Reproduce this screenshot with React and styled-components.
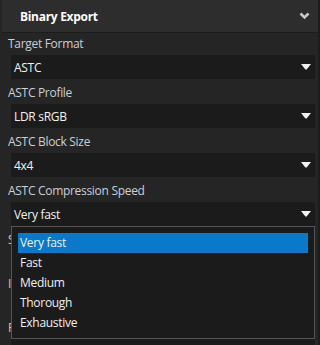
import styled, { createGlobalStyle } from 'styled-components'

const GlobalStyle = createGlobalStyle`
  html, body {
    margin: 0;
    padding: 0;
    background: #252525;
  }
  body {
    font-family: "Open Sans", "Noto Sans", sans-serif;
  }
`

const Window = styled.div`
  position: relative;
  width: 320px;
  height: 345px;
  overflow: hidden;
  display: flex;
  background: #252525;
`

const Content = styled.div`
  flex: 1;
  min-width: 0;
`

const ScrollStrip = styled.div`
  width: 2px;
  background: #1c1c1c;
`

const Header = styled.div`
  margin-left: 2px;
  height: 32px;
  background: #2d2d2d;
  border-bottom: 1px solid #1c1c1c;
  display: flex;
  align-items: center;
  justify-content: space-between;
  padding: 0 8px 0 18px;
  h2 {
    margin: 0;
    font-size: 12px;
    letter-spacing: -0.3px;
    font-weight: 700;
    color: #ffffff;
  }
`

const Body = styled.div`
  padding: 0 3px 0 8px;
`

const Field = styled.div`
  margin-bottom: 3px;
`

const Label = styled.div`
  height: 22px;
  line-height: 22px;
  font-size: 12px;
  letter-spacing: -0.3px;
  color: #c8d0da;
  white-space: nowrap;
`

const Combo = styled.div`
  margin-left: 3px;
  height: ${(p) => (p.$compact ? 19 : 24)}px;
  background: #1b1b1b;
  display: flex;
  align-items: center;
  justify-content: space-between;
  padding: 0 4px 0 3px;
  font-size: 12px;
  letter-spacing: -0.3px;
  color: #f2f2f2;
`

const Popup = styled.ul`
  position: absolute;
  left: 11px;
  top: 226px;
  width: 304px;
  height: 113px;
  box-sizing: border-box;
  margin: 0;
  padding: 6px;
  list-style: none;
  background: #1b1b1b;
  border: 1px solid #555555;
`

const Option = styled.li`
  height: 20px;
  line-height: 20px;
  padding-left: 2px;
  font-size: 12px;
  letter-spacing: -0.3px;
  color: #f0f0f0;
  background: ${(p) => (p.$active ? '#0a79c9' : 'transparent')};
`

function Triangle() {
  return (
    <svg width="10" height="6" viewBox="0 0 10 6">
      <path d="M0 0 H10 L5.6 5.4 H4.4 Z" fill="#f2f2f2" />
    </svg>
  )
}

function Chevron() {
  return (
    <svg width="11" height="8" viewBox="0 0 11 8">
      <path
        d="M1.5 1.5 L5.5 5.5 L9.5 1.5"
        fill="none"
        stroke="#c8c8c8"
        strokeWidth="2.6"
        strokeLinejoin="miter"
      />
    </svg>
  )
}

const fields = [
  { label: 'Target Format', value: 'ASTC' },
  { label: 'ASTC Profile', value: 'LDR sRGB' },
  { label: 'ASTC Block Size', value: '4x4' },
  { label: 'ASTC Compression Speed', value: 'Very fast' },
  { label: 'Swizzle', value: 'rgba', compact: true },
  { label: 'Include Mipmaps', value: '', compact: true },
  { label: 'Flip Y', value: '', compact: true },
]

const speeds = ['Very fast', 'Fast', 'Medium', 'Thorough', 'Exhaustive']

export default function App() {
  return (
    <>
      <GlobalStyle />
      <Window>
        <Content>
          <Header>
            <h2>Binary Export</h2>
            <Chevron />
          </Header>
          <Body>
            {fields.map((f) => (
              <Field key={f.label}>
                <Label>{f.label}</Label>
                <Combo $compact={f.compact}>
                  <span>{f.value}</span>
                  {!f.compact && <Triangle />}
                </Combo>
              </Field>
            ))}
          </Body>
        </Content>
        <ScrollStrip />
        <Popup>
          {speeds.map((s, i) => (
            <Option key={s} $active={i === 0}>
              {s}
            </Option>
          ))}
        </Popup>
      </Window>
    </>
  )
}
